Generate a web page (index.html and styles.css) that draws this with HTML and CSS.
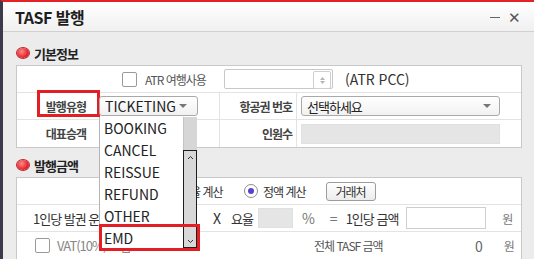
FILE: index.html
```html
<!DOCTYPE html>
<html lang="ko">
<head>
    <meta charset="UTF-8">
    <meta name="viewport" content="width=device-width, initial-scale=1.0">
    <title>TASF 발행</title>
    <link rel="stylesheet" href="styles.css">
</head>
<body>
    <div class="window">
        <div class="titlebar">
            <span class="title">TASF 발행</span>
            <span class="win-ctrl"><span class="min"></span><span class="close">✕</span></span>
        </div>
        <div class="content">
            <div class="section-head"><i class="dot"></i>기본정보</div>
            <div class="panel">
                <div class="row row-atr">
                    <label class="atr-check"><span class="check"></span>ATR 여행사용</label>
                    <span class="spin-input">
                        <span class="spin">
                            <svg width="7" height="9" viewBox="0 0 7 9"><path d="M1 4L3.5 1L6 4Z M1 5L3.5 8L6 5Z" fill="#b5b5b5"/></svg>
                        </span>
                    </span>
                    <span class="en atr-pcc">(ATR PCC)</span>
                </div>
                <div class="row grid4">
                    <div class="cell label hl">발행유형</div>
                    <div class="cell value">
                        <div class="select-wrap">
                            <div class="select small"><span class="en">TICKETING</span><i class="arrow"></i></div>
                            <div class="dropdown">
                                <div class="item">BOOKING</div>
                                <div class="item">CANCEL</div>
                                <div class="item">REISSUE</div>
                                <div class="item">REFUND</div>
                                <div class="item">OTHER</div>
                                <div class="item">EMD</div>
                                <div class="scrollbar">
                                    <div class="thumb"></div>
                                    <div class="track">
                                        <svg width="7" height="5" viewBox="0 0 7 5"><path d="M1 4L3.5 1.5L6 4" fill="none" stroke="#333" stroke-width="1"/></svg>
                                        <svg width="7" height="5" viewBox="0 0 7 5"><path d="M1 1L3.5 3.5L6 1" fill="none" stroke="#333" stroke-width="1"/></svg>
                                    </div>
                                </div>
                                <div class="mark"></div>
                            </div>
                        </div>
                    </div>
                    <div class="cell label label2">항공권 번호</div>
                    <div class="cell value value2">
                        <div class="select wide"><span>선택하세요</span><i class="arrow"></i></div>
                    </div>
                </div>
                <div class="row grid4 last">
                    <div class="cell label">대표승객</div>
                    <div class="cell value"></div>
                    <div class="cell label label2">인원수</div>
                    <div class="cell value value2"><span class="input grey wide-input"></span></div>
                </div>
            </div>

            <div class="section-head second"><i class="dot"></i>발행금액</div>
            <div class="panel">
                <div class="row row-radio">
                    <label class="radio-item"><span class="radio"></span><span class="rate-text">정율 계산</span></label>
                    <label class="radio-item"><span class="radio on"></span>정액 계산</label>
                    <span class="btn">거래처</span>
                </div>
                <div class="row row-amount">
                    <span class="fare-label">1인당 발권 운임</span>
                    <span class="input grey fare-input"></span>
                    <span class="en sym x">X</span>
                    <span class="rate-label">요율</span>
                    <span class="input grey rate-input"></span>
                    <span class="en sym muted pct">%</span>
                    <span class="en sym muted eq">=</span>
                    <span class="per-label">1인당 금액</span>
                    <span class="input per-input"></span>
                    <span class="won">원</span>
                </div>
                <div class="row row-total last">
                    <span class="check"></span>
                    <span class="vat">VAT(10%) 포함</span>
                    <span class="total-label">전체 TASF 금액</span>
                    <span class="en total-value">0</span>
                    <span class="won">원</span>
                </div>
            </div>
        </div>
    </div>
</body>
</html>
```

FILE: styles.css
```css
body{margin:0;font-family:"Noto Sans CJK KR",sans-serif;font-size:12px;letter-spacing:-1px;color:#333;background:#ececec;}
.en{font-size:14px;letter-spacing:0;}

.window{position:relative;height:259px;box-sizing:border-box;border-top:2px solid #e32227;border-left:3px solid #3d3b4b;background:#ececec;overflow:hidden;}
.titlebar{height:29px;display:flex;align-items:center;justify-content:space-between;padding:0 13px 0 12px;border-bottom:1px solid #d0d0d0;background:linear-gradient(#ffffff,#f0f0f0);}
.title{font-size:16px;font-weight:bold;color:#1e1e1e;letter-spacing:-0.5px;}
.win-ctrl{display:flex;align-items:center;gap:8px;color:#555;}
.win-ctrl .min{width:10px;height:1px;background:#666;margin-top:2px;}
.win-ctrl .close{font-size:15px;letter-spacing:0;line-height:15px;}

.content{padding:11px 12px 0 13px;}
.section-head{height:20px;display:flex;align-items:center;gap:5px;font-size:13px;font-weight:bold;color:#222;margin-bottom:2px;}
.section-head.second{margin-top:7px;}
.dot{width:12px;height:10px;border-radius:50%;background:radial-gradient(circle at 40% 35%,#ff8a8a,#e4282e 60%,#c41a20);box-shadow:0 0 0 1px #b8262b;margin-left:1px;}

.panel{background:#fff;border:1px solid #c9c9c9;}
.row{height:26px;border-bottom:1px solid #e3e3e3;display:flex;align-items:center;}
.row.last{border-bottom:none;height:27px;}

.row-atr{padding-left:105px;}
.atr-check{width:102px;display:flex;align-items:center;gap:8px;color:#555;}
.check{width:13px;height:13px;border:1px solid #9a9a9a;border-radius:2px;background:#fff;flex:none;}
.spin-input{width:107px;height:18px;border:1px solid #c8c8c8;border-radius:2px;background:#fff;display:flex;justify-content:flex-end;}
.spin{width:16px;height:16px;margin:1px;border:1px solid #cfcfcf;border-radius:2px;display:flex;align-items:center;justify-content:center;}
.atr-pcc{margin-left:12px;color:#333;}

.grid4{display:grid;grid-template-columns:81px 121px 77px 1fr;align-items:stretch;}
.cell{display:flex;align-items:center;}
.cell.label{justify-content:flex-end;padding-right:12px;font-weight:bold;color:#444;position:relative;}
.cell.label2{padding-right:4px;border-left:1px solid #e3e3e3;}
.cell.value{padding-left:1px;}
.cell.value2{padding-left:4px;border-left:1px solid #e3e3e3;}
.hl::after{content:"";position:absolute;left:20px;top:-3px;width:63px;height:27px;box-sizing:border-box;border:3px solid #e41e25;}

.select{height:18px;border:1px solid #a9a9a9;border-radius:3px;background:linear-gradient(#ffffff,#f1f1f1);display:flex;align-items:center;justify-content:space-between;padding:0 8px 0 5px;color:#222;}
.select.small{width:82px;padding-right:10px;}
.select.wide{width:184px;font-size:13px;}
.arrow{width:0;height:0;border-left:4px solid transparent;border-right:4px solid transparent;border-top:4px solid #777;}
.select-wrap{position:relative;}

.dropdown{position:absolute;left:0;top:21px;width:98px;height:132px;background:#fff;border-left:1px solid #b5b5b5;box-sizing:border-box;z-index:2;}
.item{height:22px;line-height:22px;padding-left:4px;font-size:14px;letter-spacing:0;color:#222;}
.scrollbar{position:absolute;right:0;top:0;width:14px;height:131px;background:#d9d9d9;border-left:1px solid #c4c4c4;box-sizing:border-box;}
.thumb{height:33px;background:#d6d6d6;}
.track{height:98px;border:1px solid #1e1e1e;background:#d8d8d8;box-sizing:border-box;margin-left:-1px;display:flex;flex-direction:column;justify-content:space-between;align-items:center;padding:4px 0 3px;}
.mark{position:absolute;left:-1px;top:107px;width:101px;height:27px;box-sizing:border-box;border:3px solid #e41e25;}

.input{height:20px;border:1px solid #cfcfcf;background:#fff;box-sizing:border-box;display:block;}
.input.grey{background:#e5e5e5;border-color:#e0e0e0;}
.wide-input{width:199px;}

.row-radio{padding-left:144px;}
.radio-item{display:flex;align-items:center;gap:5px;margin-right:18px;color:#333;}
.rate-text{display:inline-block;width:46px;white-space:nowrap;}
.radio{width:12px;height:12px;border:1px solid #8e8e8e;border-radius:50%;background:#fff;position:relative;flex:none;}
.radio.on::after{content:"";position:absolute;left:3px;top:3px;width:6px;height:6px;border-radius:50%;background:#5b3fd0;}
.btn{width:50px;height:19px;line-height:18px;text-align:center;border:1px solid #9c9c9c;border-radius:3px;background:linear-gradient(#ffffff,#ececec);color:#333;box-sizing:border-box;margin-left:2px;}

.row-amount{padding-left:16px;}
.fare-label{width:100px;white-space:nowrap;font-size:13px;color:#333;}
.fare-input{width:64px;}
.sym{color:#333;}
.x{margin-left:16px;}
.rate-label{margin-left:10px;font-size:13px;}
.rate-input{width:35px;margin-left:5px;}
.pct{margin-left:9px;}
.eq{margin-left:15px;}
.muted{color:#777;}
.per-label{margin-left:8px;font-size:13px;color:#333;}
.per-input{width:80px;height:22px;margin-left:8px;}
.won{margin-left:16px;color:#777;}

.row-total{padding-left:18px;}
.vat{width:257px;margin-left:7px;white-space:nowrap;color:#888;font-size:13px;}
.total-label{width:161px;color:#555;}
.total-value{color:#666;}
.row-total .won{margin-left:21px;}
```
